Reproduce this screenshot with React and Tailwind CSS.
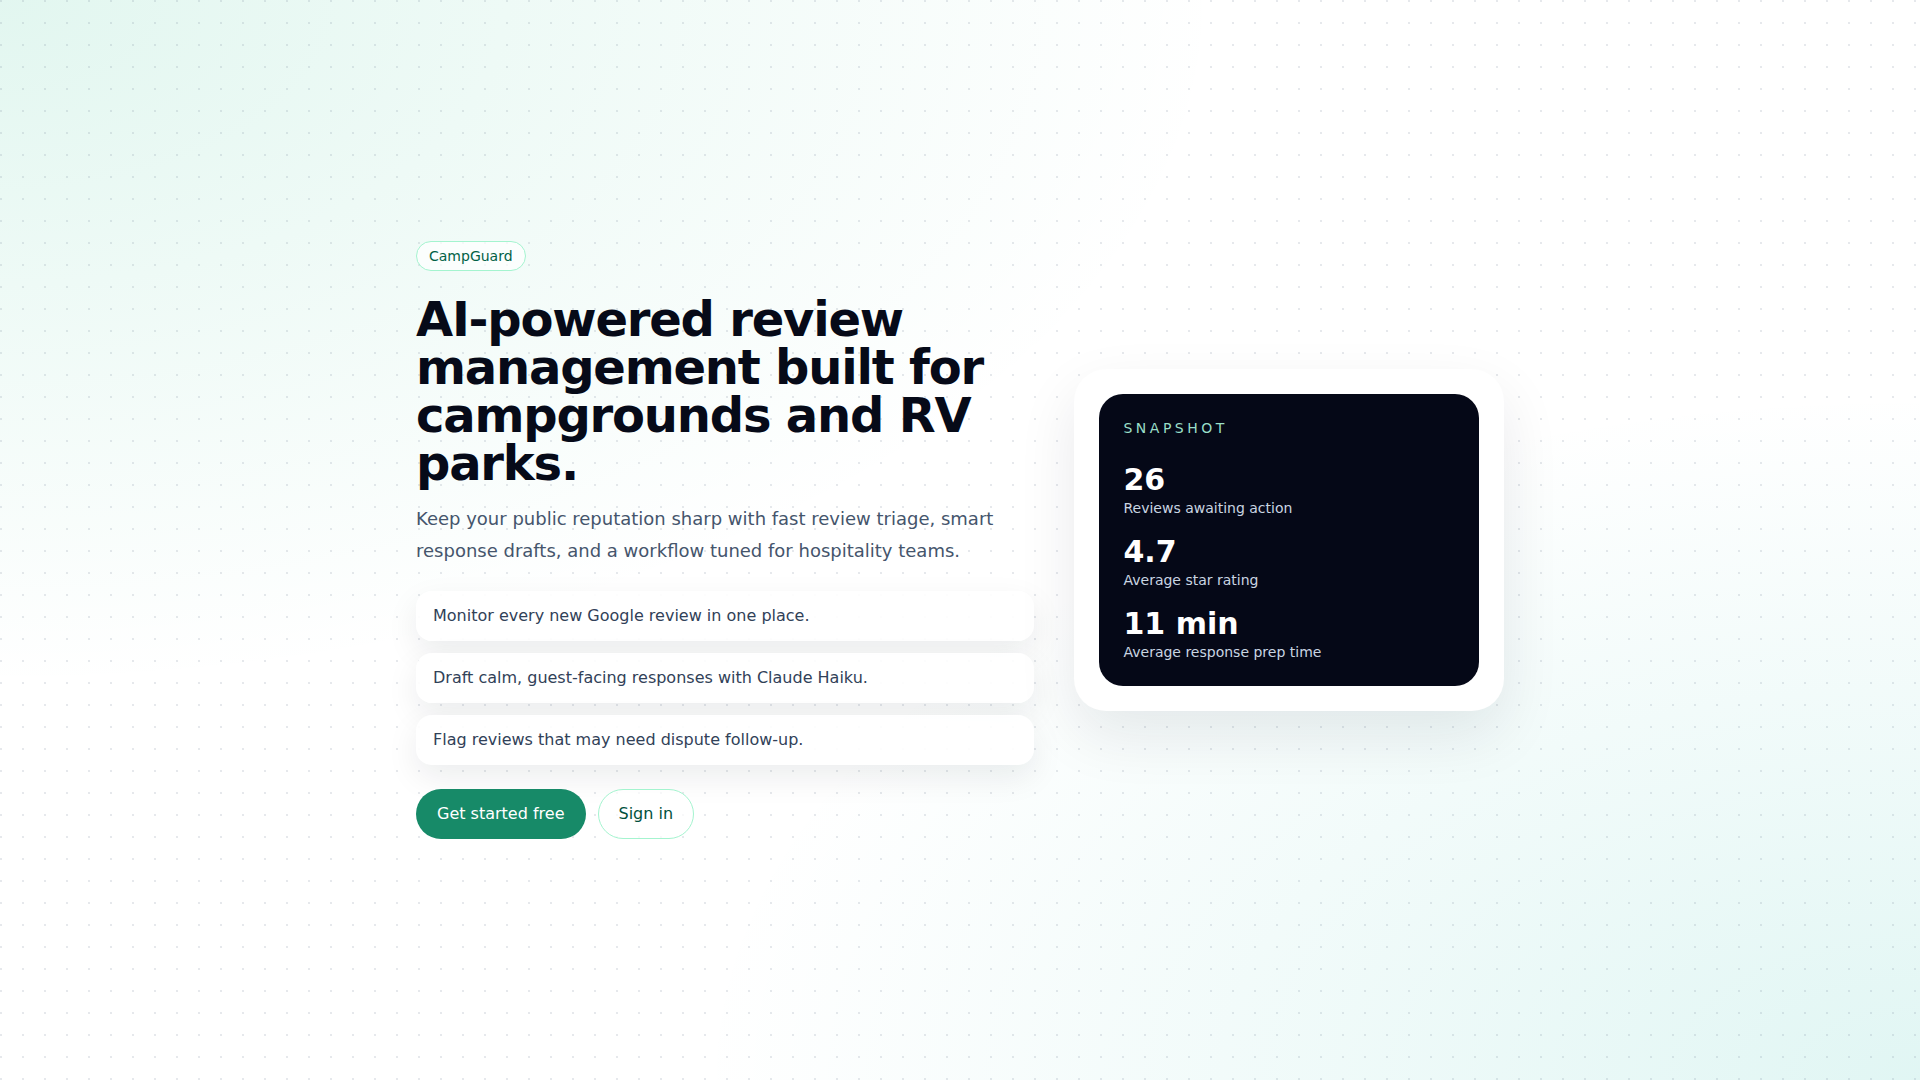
import React from "react";

const features = [
  "Monitor every new Google review in one place.",
  "Draft calm, guest-facing responses with Claude Haiku.",
  "Flag reviews that may need dispute follow-up.",
];

const stats = [
  { value: "26", label: "Reviews awaiting action" },
  { value: "4.7", label: "Average star rating" },
  { value: "11 min", label: "Average response prep time" },
];

export default function App() {
  return (
    <div className="relative min-h-screen overflow-hidden bg-white font-['DejaVu_Sans',sans-serif] text-slate-900">
      <div className="pointer-events-none absolute inset-0 bg-[radial-gradient(ellipse_at_top_left,rgba(16,185,129,0.12),transparent_45%)]" />
      <div className="pointer-events-none absolute inset-0 bg-[radial-gradient(ellipse_at_bottom_right,rgba(20,184,166,0.13),transparent_45%)]" />
      <div className="pointer-events-none absolute inset-0 bg-[radial-gradient(circle_at_1px_1px,rgba(100,116,139,0.16)_1px,transparent_0)] bg-[size:22px_22px]" />

      <main className="relative mx-auto flex min-h-screen max-w-6xl items-center px-8">
        <div className="grid w-full grid-cols-[1.44fr_1fr] items-center gap-10">
          <div>
            <span className="inline-block rounded-full border border-emerald-200 bg-white/70 px-3 py-1 text-sm text-emerald-800">
              CampGuard
            </span>
            <h1 className="mt-6 text-5xl font-bold leading-none tracking-tight text-[#060a18]">
              AI-powered review management built for campgrounds and RV parks.
            </h1>
            <p className="mt-4 text-lg leading-8 text-slate-600">
              Keep your public reputation sharp with fast review triage, smart
              response drafts, and a workflow tuned for hospitality teams.
            </p>
            <ul className="mt-6 flex flex-col gap-3">
              {features.map((f) => (
                <li
                  key={f}
                  className="rounded-2xl border border-white/80 bg-white/90 px-4 py-3 text-base leading-6 text-slate-700 shadow-[0_12px_32px_rgba(15,23,42,0.08)]"
                >
                  {f}
                </li>
              ))}
            </ul>
            <div className="mt-6 flex items-center gap-3">
              <button className="rounded-full border border-transparent bg-[#178a68] px-5 py-3 text-base leading-6 text-white">
                Get started free
              </button>
              <button className="rounded-full border border-emerald-200 bg-white/70 px-5 py-3 text-base leading-6 text-emerald-900">
                Sign in
              </button>
            </div>
          </div>

          <div className="rounded-[2rem] border border-white/80 bg-white p-6 shadow-[0_24px_60px_rgba(15,23,42,0.09)]">
            <div className="rounded-3xl bg-[#050817] p-6">
              <p className="text-sm uppercase leading-5 tracking-[0.25em] text-[#9adfc8]">
                Snapshot
              </p>
              <div className="mt-6 flex flex-col gap-4">
                {stats.map((s) => (
                  <div key={s.label}>
                    <div className="text-3xl font-bold text-white">{s.value}</div>
                    <div className="text-sm leading-5 text-slate-300">{s.label}</div>
                  </div>
                ))}
              </div>
            </div>
          </div>
        </div>
      </main>
    </div>
  );
}
